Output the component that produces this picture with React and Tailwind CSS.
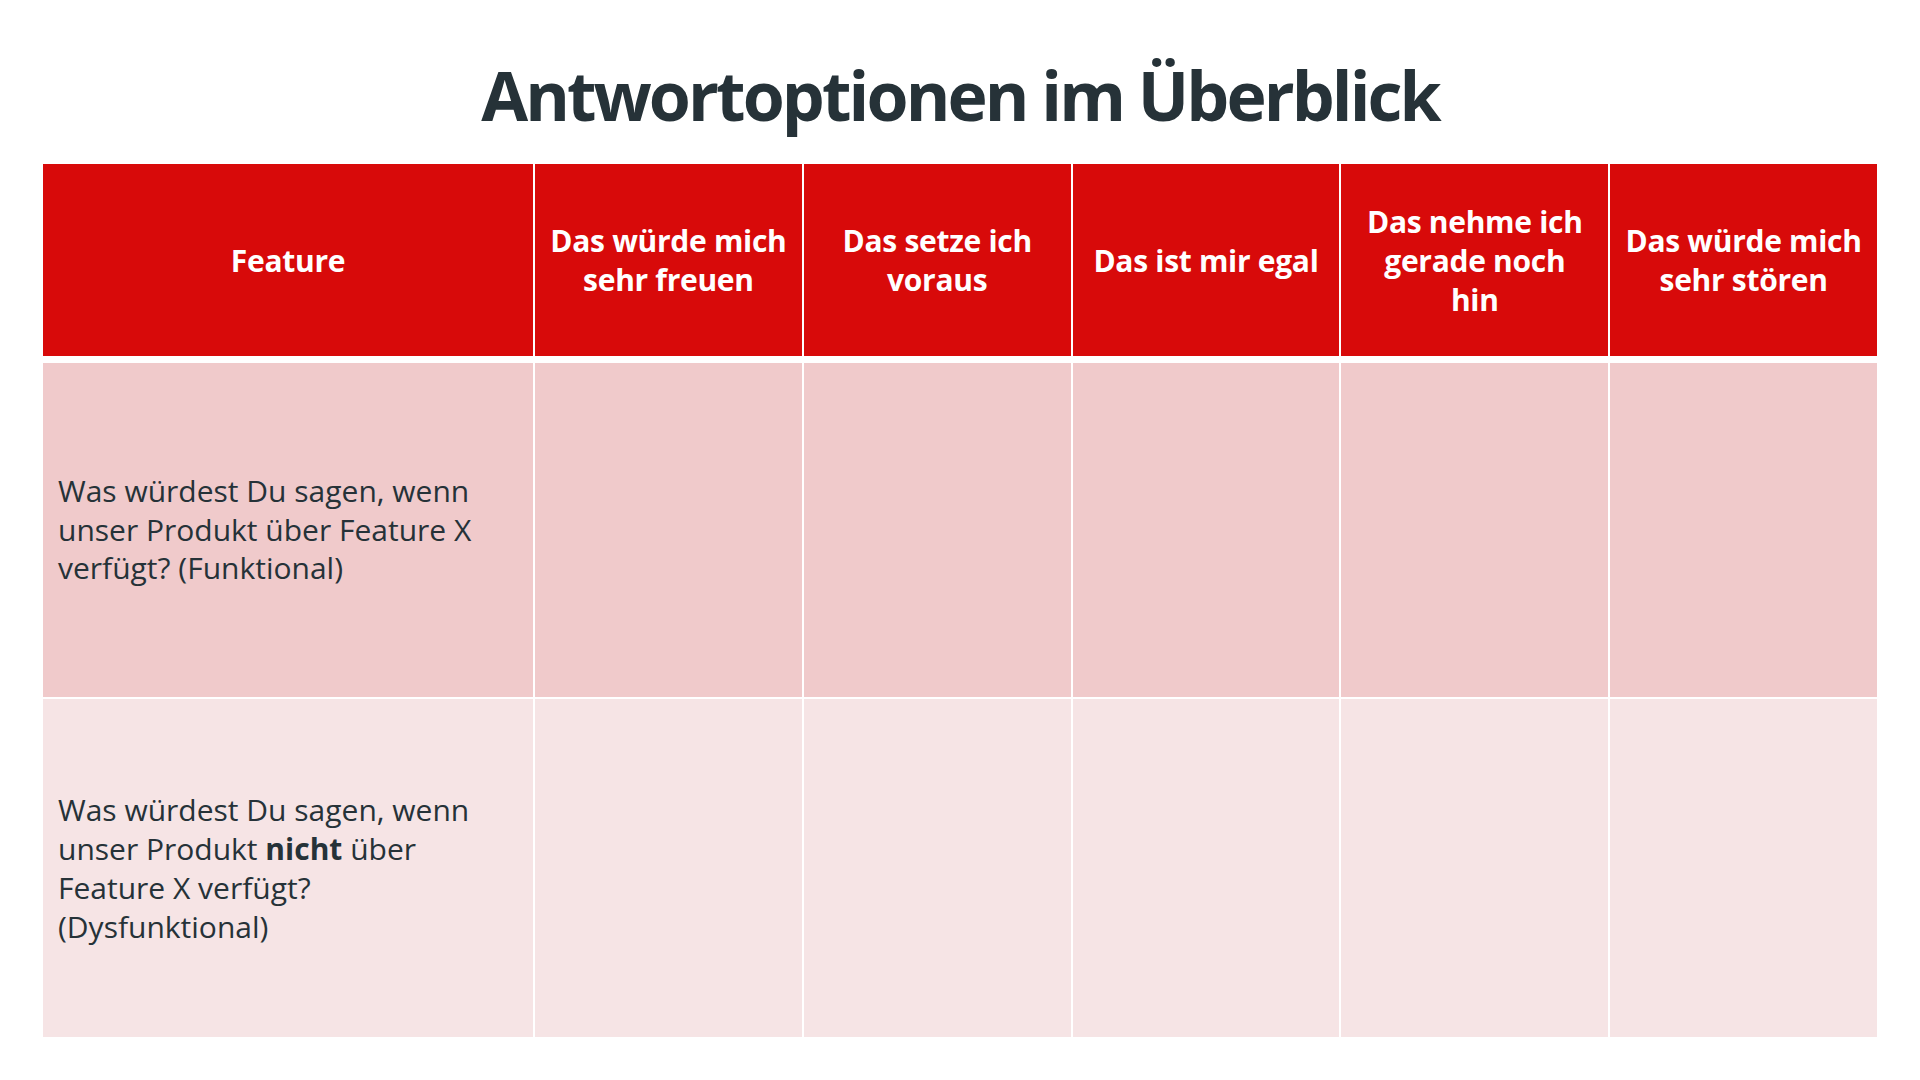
const headers = [
  ["Feature"],
  ["Das würde mich", "sehr freuen"],
  ["Das setze ich", "voraus"],
  ["Das ist mir egal"],
  ["Das nehme ich", "gerade noch", "hin"],
  ["Das würde mich", "sehr stören"],
];

export default function App() {
  return (
    <div className="w-[1920px] h-[1080px] bg-white font-['Open_Sans',sans-serif] text-[#263238]">
      <h1 className="h-[164px] pt-[52px] text-center text-[68px] leading-[86px] font-bold tracking-[-2.9px] text-[#263238]">
        Antwortoptionen im Überblick
      </h1>

      <div className="ml-[43px] w-[1834px] grid grid-cols-[490px_repeat(5,1fr)] grid-rows-[192px_341px_340px] gap-x-[2px] bg-white">
        {headers.map((lines) => (
          <div
            key={lines.join(" ")}
            className="bg-[#d80a0a] text-white font-bold text-[30px] leading-[39px] tracking-[-0.3px] flex flex-col items-center justify-center text-center whitespace-nowrap"
          >
            {lines.map((l) => (
              <span key={l}>{l}</span>
            ))}
          </div>
        ))}

        {/* row 1: funktional */}
        <div className="mt-[7px] bg-[#f0cacb] flex items-center pl-[15px]">
          <p className="w-[425px] text-[30px] leading-[38.5px]">
            Was würdest Du sagen, wenn unser Produkt über Feature X verfügt? (Funktional)
          </p>
        </div>
        {[1, 2, 3, 4, 5].map((i) => (
          <div key={i} className="mt-[7px] bg-[#f0cacb]" />
        ))}

        {/* row 2: dysfunktional */}
        <div className="mt-[2px] bg-[#f6e4e5] flex items-center pl-[15px]">
          <p className="w-[425px] text-[30px] leading-[39px]">
            Was würdest Du sagen, wenn unser Produkt <b>nicht</b> über Feature X verfügt? (Dysfunktional)
          </p>
        </div>
        {[1, 2, 3, 4, 5].map((i) => (
          <div key={i} className="mt-[2px] bg-[#f6e4e5]" />
        ))}
      </div>
    </div>
  );
}
